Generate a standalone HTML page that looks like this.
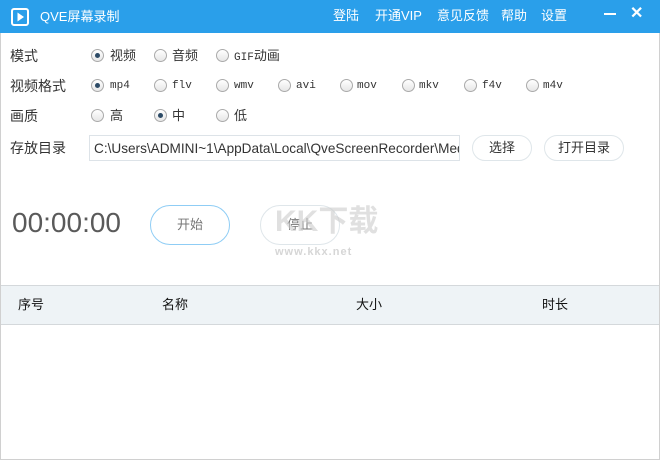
<!DOCTYPE html>
<html><head><meta charset="utf-8"><style>
*{margin:0;padding:0;box-sizing:border-box}
body{width:660px;height:460px;overflow:hidden;background:#fff;font-family:"Liberation Sans","Noto Sans CJK SC",sans-serif;position:relative;color:#333}
.win{position:absolute;left:0;top:0;width:660px;height:460px;border:1px solid #d0d0d0;border-top:none}
.tb{position:absolute;left:0;top:0;width:660px;height:33px;background:#2a9fea;color:#fff}
.abs{position:absolute;white-space:nowrap}
.lbl{font-size:14px;color:#333;line-height:16px}
.r{position:absolute;width:13px;height:13px;border-radius:50%;border:1px solid #aaa;background:linear-gradient(#fff,#e6e6e6)}
.r.on::after{content:"";position:absolute;left:3px;top:3px;width:5px;height:5px;border-radius:50%;background:#2c4a66}
.rt{position:absolute;font-size:13px;color:#333;line-height:15px;white-space:nowrap}
.mono{font-family:"Liberation Mono","Noto Sans CJK SC",monospace;font-size:11px}
.btn{position:absolute;border:1px solid #dfe6ea;border-radius:13px;font-size:13px;text-align:center;color:#333}
</style></head><body>
<div class="win"></div>
<div class="tb">
<svg class="abs" style="left:11px;top:8px" width="18" height="18" viewBox="0 0 18 18"><rect x="1" y="1" width="16" height="16" rx="2" fill="none" stroke="#fff" stroke-width="2"/><path d="M6.5 4.5 L13 9 L6.5 13.5Z" fill="#fff"/></svg>
<div class="abs" style="left:40px;top:9px;font-size:13px;line-height:16px">QVE屏幕录制</div>
<div class="abs" style="left:333px;top:8px;font-size:13px;line-height:16px">登陆</div>
<div class="abs" style="left:375px;top:8px;font-size:13px;line-height:16px">开通VIP</div>
<div class="abs" style="left:437px;top:8px;font-size:13px;line-height:16px">意见反馈</div>
<div class="abs" style="left:501px;top:8px;font-size:13px;line-height:16px">帮助</div>
<div class="abs" style="left:541px;top:8px;font-size:13px;line-height:16px">设置</div>
<div class="abs" style="left:604px;top:13px;width:12px;height:2px;background:#fff"></div>
<div class="abs" style="left:630px;top:3px;font-size:16px;font-weight:bold">✕</div>
</div>

<div class="abs lbl" style="left:10px;top:48px">模式</div>
<div class="abs lbl" style="left:10px;top:78px">视频格式</div>
<div class="abs lbl" style="left:10px;top:108px">画质</div>
<div class="abs lbl" style="left:10px;top:140px">存放目录</div>

<div class="r on" style="left:91px;top:49px"></div><div class="rt" style="left:110px;top:48px">视频</div>
<div class="r" style="left:154px;top:49px"></div><div class="rt" style="left:172px;top:48px">音频</div>
<div class="r" style="left:216px;top:49px"></div><div class="rt" style="left:234px;top:48px"><span class="mono">GIF</span>动画</div>

<div class="r on" style="left:91px;top:79px"></div><div class="rt mono" style="left:110px;top:79px">mp4</div>
<div class="r" style="left:154px;top:79px"></div><div class="rt mono" style="left:172px;top:79px">flv</div>
<div class="r" style="left:216px;top:79px"></div><div class="rt mono" style="left:234px;top:79px">wmv</div>
<div class="r" style="left:278px;top:79px"></div><div class="rt mono" style="left:296px;top:79px">avi</div>
<div class="r" style="left:340px;top:79px"></div><div class="rt mono" style="left:357px;top:79px">mov</div>
<div class="r" style="left:402px;top:79px"></div><div class="rt mono" style="left:419px;top:79px">mkv</div>
<div class="r" style="left:464px;top:79px"></div><div class="rt mono" style="left:482px;top:79px">f4v</div>
<div class="r" style="left:526px;top:79px"></div><div class="rt mono" style="left:543px;top:79px">m4v</div>

<div class="r" style="left:91px;top:109px"></div><div class="rt" style="left:110px;top:108px">高</div>
<div class="r on" style="left:154px;top:109px"></div><div class="rt" style="left:172px;top:108px">中</div>
<div class="r" style="left:216px;top:109px"></div><div class="rt" style="left:234px;top:108px">低</div>

<div class="abs" style="left:89px;top:135px;width:371px;height:26px;border:1px solid #dde3e8;overflow:hidden;font-size:13.6px;line-height:16px;padding:5px 0 0 4px;color:#333">C:\Users\ADMINI~1\AppData\Local\QveScreenRecorder\Media</div>
<div class="btn" style="left:472px;top:135px;width:60px;height:26px;line-height:24px">选择</div>
<div class="btn" style="left:544px;top:135px;width:80px;height:26px;line-height:24px">打开目录</div>

<div class="abs" style="left:12px;top:207px;font-size:28px;line-height:32px;color:#5a5a5a">00:00:00</div>
<div class="btn" style="left:150px;top:205px;width:80px;height:40px;border-radius:20px;border-color:#8fcdf5;line-height:38px;color:#777">开始</div>
<div class="btn" style="left:260px;top:205px;width:80px;height:40px;border-radius:20px;line-height:38px;color:#777">停止</div>
<div class="abs" style="left:275px;top:205px;font-size:30px;line-height:34px;font-weight:bold;color:#ccc;opacity:.6">KK下载</div>
<div class="abs" style="left:275px;top:246px;font-size:11px;font-weight:bold;color:#ccc;letter-spacing:1px;opacity:.8">www.kkx.net</div>

<div class="abs" style="left:1px;top:285px;width:658px;height:40px;background:#eef3f6;border-top:1px solid #d4d8db;border-bottom:1px solid #d4d8db"></div>
<div class="abs" style="left:18px;top:297px;font-size:13px;line-height:16px;color:#111">序号</div>
<div class="abs" style="left:162px;top:297px;font-size:13px;line-height:16px;color:#111">名称</div>
<div class="abs" style="left:356px;top:297px;font-size:13px;line-height:16px;color:#111">大小</div>
<div class="abs" style="left:542px;top:297px;font-size:13px;line-height:16px;color:#111">时长</div>
</body></html>
